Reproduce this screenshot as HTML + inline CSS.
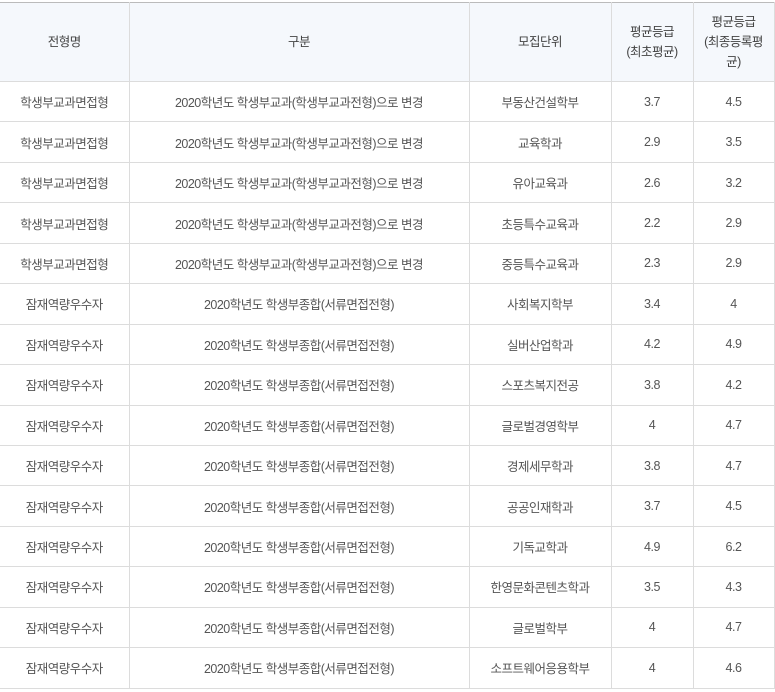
<!DOCTYPE html>
<html><head><meta charset="utf-8"><style>
html,body{margin:0;padding:0;background:#fff;}
table{position:absolute;left:0;top:2px;width:774px;border-collapse:collapse;table-layout:fixed;font-family:"Liberation Sans","Noto Sans CJK KR",sans-serif;font-size:12.5px;color:#555;letter-spacing:-0.5px;}
th,td{border:1px solid #dcdcdc;text-align:center;padding:0;font-weight:normal;}
tr:first-child th{border-top:1px solid #bbb;}
th:first-child,td:first-child{border-left:none;}
th{background:#f5f8fc;height:78px;line-height:20px;color:#444;}
td{height:39.45px;}
</style></head><body>
<table>
<colgroup><col style="width:129px"><col style="width:340px"><col style="width:142px"><col style="width:82px"><col style="width:81px"></colgroup>
<tr><th>전형명</th><th>구분</th><th>모집단위</th><th>평균등급<br>(최초평균)</th><th>평균등급<br>(최종등록평<br>균)</th></tr>
<tr><td>학생부교과면접형</td><td>2020학년도 학생부교과(학생부교과전형)으로 변경</td><td>부동산건설학부</td><td>3.7</td><td>4.5</td></tr>
<tr><td>학생부교과면접형</td><td>2020학년도 학생부교과(학생부교과전형)으로 변경</td><td>교육학과</td><td>2.9</td><td>3.5</td></tr>
<tr><td>학생부교과면접형</td><td>2020학년도 학생부교과(학생부교과전형)으로 변경</td><td>유아교육과</td><td>2.6</td><td>3.2</td></tr>
<tr><td>학생부교과면접형</td><td>2020학년도 학생부교과(학생부교과전형)으로 변경</td><td>초등특수교육과</td><td>2.2</td><td>2.9</td></tr>
<tr><td>학생부교과면접형</td><td>2020학년도 학생부교과(학생부교과전형)으로 변경</td><td>중등특수교육과</td><td>2.3</td><td>2.9</td></tr>
<tr><td>잠재역량우수자</td><td>2020학년도 학생부종합(서류면접전형)</td><td>사회복지학부</td><td>3.4</td><td>4</td></tr>
<tr><td>잠재역량우수자</td><td>2020학년도 학생부종합(서류면접전형)</td><td>실버산업학과</td><td>4.2</td><td>4.9</td></tr>
<tr><td>잠재역량우수자</td><td>2020학년도 학생부종합(서류면접전형)</td><td>스포츠복지전공</td><td>3.8</td><td>4.2</td></tr>
<tr><td>잠재역량우수자</td><td>2020학년도 학생부종합(서류면접전형)</td><td>글로벌경영학부</td><td>4</td><td>4.7</td></tr>
<tr><td>잠재역량우수자</td><td>2020학년도 학생부종합(서류면접전형)</td><td>경제세무학과</td><td>3.8</td><td>4.7</td></tr>
<tr><td>잠재역량우수자</td><td>2020학년도 학생부종합(서류면접전형)</td><td>공공인재학과</td><td>3.7</td><td>4.5</td></tr>
<tr><td>잠재역량우수자</td><td>2020학년도 학생부종합(서류면접전형)</td><td>기독교학과</td><td>4.9</td><td>6.2</td></tr>
<tr><td>잠재역량우수자</td><td>2020학년도 학생부종합(서류면접전형)</td><td>한영문화콘텐츠학과</td><td>3.5</td><td>4.3</td></tr>
<tr><td>잠재역량우수자</td><td>2020학년도 학생부종합(서류면접전형)</td><td>글로벌학부</td><td>4</td><td>4.7</td></tr>
<tr><td>잠재역량우수자</td><td>2020학년도 학생부종합(서류면접전형)</td><td>소프트웨어응용학부</td><td>4</td><td>4.6</td></tr>
</table>
</body></html>
